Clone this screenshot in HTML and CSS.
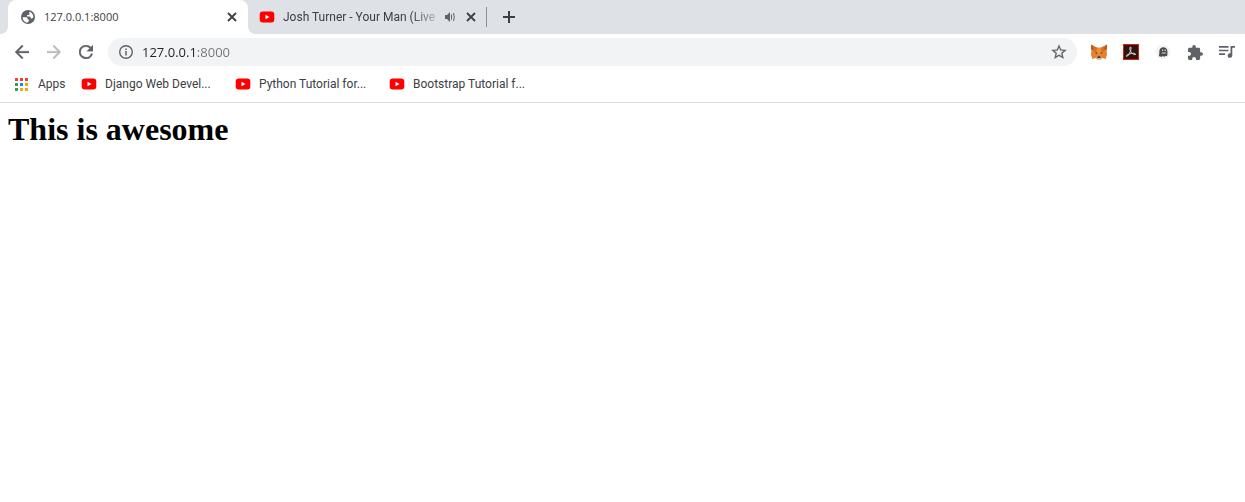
FILE: index.html
```html
<!DOCTYPE html>
<html lang="en">
<head>
	<meta charset="UTF-8">
	<meta name="viewport" content="width=device-width, initial-scale=1.0">
	<title>127.0.0.1:8000</title>
	<link rel="stylesheet" href="styles.css">
</head>
<body>
	<!-- shared icons -->
	<svg class="sprite" aria-hidden="true">
		<symbol id="youtube" viewBox="0 0 16 12">
			<rect x=".7" y=".5" width="14.600" height="11" rx="3" fill="#f00"/>
			<path d="M6.500 3.700v4.600l4-2.300z" fill="#fff"/>
		</symbol>
		<symbol id="close" viewBox="0 0 10 10">
			<path d="M1 1l8 8M9 1L1 9" stroke="currentColor" stroke-width="1.8" fill="none"/>
		</symbol>
	</svg>

	<header class="browser">
		<div class="tab-strip">
			<div class="tab active">
				<svg class="icon" viewBox="0 0 16 16"><circle cx="8" cy="8" r="7" fill="#5f6368"/><path d="M2.600 8.200l3.400.1c1.200 0 1.500.7 1.500 1.500v.8h1.300v1.600l-1.800 1.500C4.500 13.300 2.700 11 2.600 8.200zM9 2.800c2.500.4 4.300 2.500 4.400 4.900-.2.900-.7 1.500-1.400 1.800h-1.300V8.300L9.800 7.400H7V6h1.500l.9-.8V3.800z" fill="#fff"/></svg>
				<button class="tab-title">127.0.0.1:8000</button>
				<button class="close" aria-label="Close tab"><svg width="10" height="10"><use href="#close"/></svg></button>
			</div>
			<div class="tab">
				<svg class="tab-logo" width="16" height="12"><use href="#youtube"/></svg>
				<button class="tab-title faded">Josh Turner - Your Man (Live</button>
				<button class="sound" aria-label="Mute tab">
					<svg width="12" height="12" viewBox="0 0 12 12"><path d="M1 4h2l3-3v10L3 8H1z" fill="#5f6368"/><path d="M7.500 3.500v5M9.500 2q1.500 4 0 8" stroke="#5f6368" fill="none"/></svg>
				</button>
				<button class="close" aria-label="Close tab"><svg width="10" height="10"><use href="#close"/></svg></button>
			</div>
			<span class="separator"></span>
			<button class="new-tab" aria-label="New tab">
				<svg width="12" height="12" viewBox="0 0 12 12"><path d="M6 0v12M0 6h12" stroke="currentColor" stroke-width="2"/></svg>
			</button>
		</div>

		<div class="toolbar">
			<button class="tool" aria-label="Back">
				<svg width="14" height="14" viewBox="4 4 16 16"><path d="M20 11H7.830l5.590-5.590L12 4l-8 8 8 8 1.410-1.410L7.830 13H20z" fill="#5f6368" stroke="#5f6368" stroke-width=".4"/></svg>
			</button>
			<button class="tool" aria-label="Forward" disabled>
				<svg width="14" height="14" viewBox="4 4 16 16"><path d="M12 4l-1.410 1.410L16.170 11H4v2h12.170l-5.580 5.590L12 20l8-8z" fill="#babcbe" stroke="#babcbe" stroke-width=".4"/></svg>
			</button>
			<button class="tool" aria-label="Reload">
				<svg width="14" height="14" viewBox="4 4 16 16"><path d="M17.650 6.350A7.960 7.960 0 0 0 12 4a8 8 0 1 0 7.730 10h-2.080A6 6 0 1 1 12 6c1.660 0 3.140.69 4.220 1.780L13 11h7V4z" fill="#5f6368" stroke="#5f6368" stroke-width=".4"/></svg>
			</button>

			<div class="omnibox">
				<button class="site-info" aria-label="View site information">
					<svg width="14" height="14" viewBox="0 0 14 14"><circle cx="7" cy="7" r="6.300" fill="none" stroke="#5f6368" stroke-width="1.400"/><path d="M7 6v4.500M7 3.400v1.600" stroke="#5f6368" stroke-width="1.500"/></svg>
				</button>
				<input class="address" type="text" value="127.0.0.1:8000" aria-label="Address" spellcheck="false">
				<button class="bookmark-star" aria-label="Bookmark this page">
					<svg width="16" height="16" viewBox="1.500 1.500 21 21"><path d="M22 9.240l-7.190-.62L12 2 9.190 8.630 2 9.240l5.460 4.730L5.820 21 12 17.270 18.180 21l-1.630-7.030zM12 15.400l-3.760 2.270 1-4.280-3.320-2.880 4.380-.38L12 6.100l1.710 4.040 4.380.38-3.320 2.880 1 4.280z" fill="#5f6368" stroke="#5f6368" stroke-width=".2"/></svg>
				</button>
			</div>

			<div class="extensions">
				<button class="tool" aria-label="Wallet">
					<svg width="16" height="16" viewBox="0 0 16 16">
						<path d="M0 .5l6 3h4l6-3-.5 5 .5 5-1.300 4.500L11 14l-1 1.500H6L5 14l-3.700 1L0 10.500l.5-5z" fill="#e8812a"/>
						<path d="M0 .5l6 3.500-1 4-4.500-2zM16 .5L10 4l1 4 4.500-2z" fill="#d96f25"/>
						<path d="M0 .5L.5 6l2-1.500zM16 .5L15.500 6l-2-1.500z" fill="#94552c"/>
						<path d="M6 4h4l-.5 7h-3z" fill="#f09035"/>
						<path d="M4 8.300l2.500.5-.5 1.200zM12 8.300l-2.500.5.5 1.200z" fill="#30363c"/>
						<path d="M5.500 13l1-1h3l1 1-1 2.500h-3z" fill="#d5bfb2"/>
						<path d="M6.500 12.300h3v1.700h-3z" fill="#292929"/>
					</svg>
				</button>
				<button class="tool" aria-label="Acrobat">
					<svg width="16" height="16" viewBox="0 0 16 16">
						<rect x=".5" y=".5" width="15" height="15" fill="#2d1512" stroke="#e01e0a"/>
						<path d="M7.200 3c1.300-.4.900 2.300.100 4.500-.9 2.500-2.500 4.900-3.600 4.900-1.300-.1.300-1.800 2.700-2.500 2.400-.8 6-.9 6.200.2.100 1.300-2.700.3-4.200-1.600C7.100 6.900 6.400 4 7.200 3z" fill="none" stroke="#ddd" stroke-width="1"/>
					</svg>
				</button>
				<button class="tool" aria-label="Ghostery">
					<svg width="16" height="16" viewBox="0 0 16 16">
						<circle cx="8" cy="8" r="7.500" fill="#f4f4f4"/>
						<path d="M3.800 12c.6-1 .5-3 .6-5.200C4.600 4.600 6.300 3.300 8.300 3.300S12.400 4.800 12.400 7v3.500c0 1.300-.9 2-1.900 1.500-.8.900-1.700.9-2.500 0-1 .9-2.700.8-4.200 0z" fill="#4a4a4a"/>
						<path d="M7 5.500h1.200v1.500H7zM9.700 5.500h1.200v1.500H9.700zM6.800 8.500h4v1h-4z" fill="#ddd"/>
					</svg>
				</button>
				<button class="tool" aria-label="Extensions">
					<svg width="15" height="15" viewBox="2 1 21 21"><path d="M20.500 11H19V7c0-1.100-.9-2-2-2h-4V3.500a2.500 2.500 0 0 0-5 0V5H4c-1.100 0-1.990.9-1.990 2v3.800H3.500c1.490 0 2.700 1.210 2.700 2.700s-1.210 2.700-2.700 2.700H2V20c0 1.100.9 2 2 2h3.800v-1.500c0-1.490 1.210-2.700 2.700-2.700s2.700 1.210 2.700 2.700V22H17c1.100 0 2-.9 2-2v-4h1.500a2.500 2.500 0 0 0 0-5z" fill="#5f6368"/></svg>
				</button>
				<button class="tool" aria-label="Media controls">
					<svg width="16" height="12" viewBox="0 0 16 12"><path d="M0 .9h9.500M0 4.500h9.500M0 8.100h6" stroke="#5f6368" stroke-width="1.600"/><path d="M11.500 0H16v1.800h-2.700V9.500a2.300 2.300 0 1 1-1.800-2.200z" fill="#5f6368"/></svg>
				</button>
			</div>
		</div>

		<nav class="bookmarks">
			<a class="apps" href="#">
				<svg width="13" height="13" viewBox="0 0 13 13">
					<path d="M0 0h3v3H0zM5 0h3v3H5zM10 0h3v3h-3z" fill="#ea4335"/>
					<path d="M0 5h3v3H0zM0 10h3v3H0z" fill="#34a053"/>
					<path d="M5 5h3v3H5z" fill="#1a84f0"/>
					<path d="M10 5h3v3h-3zM5 10h3v3H5zM10 10h3v3h-3z" fill="#f2a90c"/>
				</svg>
				Apps
			</a>
			<a class="bookmark" href="#"><svg width="16" height="12"><use href="#youtube"/></svg>Django Web Devel...</a>
			<a class="bookmark" href="#"><svg width="16" height="12"><use href="#youtube"/></svg>Python Tutorial for...</a>
			<a class="bookmark" href="#"><svg width="16" height="12"><use href="#youtube"/></svg>Bootstrap Tutorial f...</a>
		</nav>
	</header>

	<main class="page">
		<h1>This is awesome</h1>
	</main>
</body>
</html>
```
FILE: styles.css
```css
* {
	box-sizing: border-box;
}

body {
	margin: 0;
	background: #fff;
	color: #000;
	font-family: "Liberation Serif", "Times New Roman", serif;
}

svg {
	display: block;
	flex: none;
}

button {
	display: flex;
	align-items: center;
	justify-content: center;
	flex: none;
	margin: 0;
	padding: 0;
	border: none;
	background: none;
	color: inherit;
	font: inherit;
}

.sprite {
	display: none;
}

.browser {
	border-bottom: 1px solid #dadce0;
	color: #3c4043;
	font-family: "Open Sans", "Noto Sans", sans-serif;
	font-size: 11px;
	line-height: 16px;
}

/* Tabs */
.tab-strip {
	display: flex;
	align-items: center;
	height: 34px;
	padding-left: 8px;
	background: #dee1e6;
}

.tab {
	display: flex;
	align-items: center;
	width: 238px;
	height: 34px;
	padding: 0 7px 0 11px;
}

.tab.active {
	position: relative;
	width: 240px;
	padding: 0 8px 0 12px;
	border-radius: 8px 8px 0 0;
	background: #fff;
}

/* curved feet of the selected tab */
.tab.active::before,
.tab.active::after {
	content: "";
	position: absolute;
	bottom: 0;
	width: 8px;
	height: 8px;
}

.tab.active::before {
	right: 100%;
	background: radial-gradient(circle at 0 0, transparent 8px, #fff 8px);
}

.tab.active::after {
	left: 100%;
	background: radial-gradient(circle at 100% 0, transparent 8px, #fff 8px);
}

.icon {
	width: 16px;
	height: 16px;
}

.tab-title {
	flex: 1;
	justify-content: flex-start;
	min-width: 0;
	margin-left: 8px;
	overflow: hidden;
	white-space: nowrap;
}

.faded {
	font-family: Roboto, sans-serif;
	font-size: 12px;
	-webkit-mask-image: linear-gradient(to right, #000 84%, rgba(0, 0, 0, 0.3));
	mask-image: linear-gradient(to right, #000 84%, rgba(0, 0, 0, 0.3));
}

.sound {
	width: 16px;
	height: 16px;
	margin: 0 5px 0 7px;
}

.close {
	width: 16px;
	height: 16px;
}

.separator {
	width: 1px;
	height: 20px;
	background: #8d9094;
}

.new-tab {
	width: 28px;
	height: 28px;
	margin-left: 8px;
}

/* Toolbar */
.toolbar {
	display: flex;
	align-items: center;
	height: 36px;
	padding: 0 2px 0 6px;
}

.tool {
	width: 32px;
	height: 28px;
}

.omnibox {
	display: flex;
	align-items: center;
	flex: 1;
	height: 28px;
	margin: 0 6px;
	padding: 0 10px;
	border-radius: 14px;
	background: #f1f3f4;
}

.site-info,
.bookmark-star {
	width: 16px;
	height: 16px;
}

.address {
	flex: 1;
	min-width: 0;
	margin: 0 8px;
	padding: 0;
	border: none;
	outline: none;
	/* host is dark, port is grey */
	background: linear-gradient(to right, #202124 54px, #70757a 54px);
	-webkit-background-clip: text;
	background-clip: text;
	color: transparent;
	font-family: inherit;
	font-size: 13px;
	line-height: 20px;
}

.extensions {
	display: flex;
}

/* Bookmarks bar */
.bookmarks {
	display: flex;
	align-items: center;
	height: 32px;
	padding: 0 15px 4px;
	font-family: Roboto, sans-serif;
	font-size: 12px;
}

.bookmarks a {
	display: flex;
	align-items: center;
	color: inherit;
	text-decoration: none;
	white-space: nowrap;
}

.apps {
	gap: 10px;
	width: 66px;
}

.bookmark {
	gap: 8px;
	width: 154px;
}

/* Page */
.page {
	padding: 8px;
}

.page h1 {
	margin: 0;
	font-size: 32px;
	line-height: 37px;
}
```
